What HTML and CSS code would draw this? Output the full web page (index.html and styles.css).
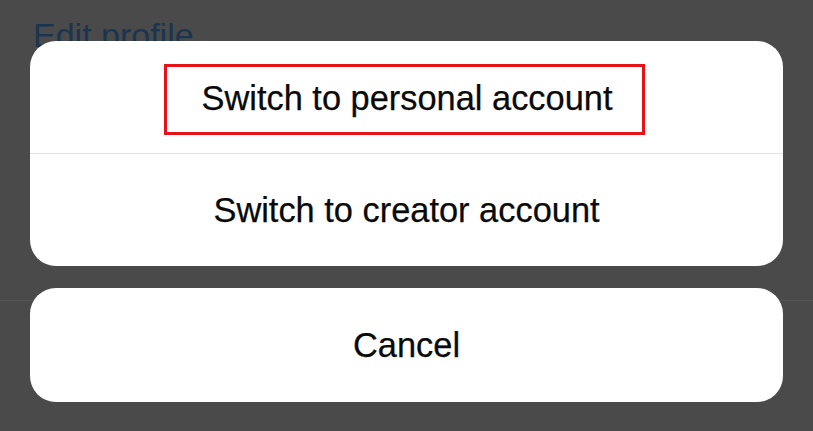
FILE: index.html
```html
<!DOCTYPE html>
<html lang="en">
<head>
<meta charset="utf-8">
<title>Switch account</title>
<link rel="stylesheet" href="styles.css">
</head>
<body>
<div class="screen">
  <div class="backdrop">
    <div class="page-title">Edit profile</div>
    <div class="page-rule"></div>
  </div>
  <div class="sheet">
    <div class="card">
      <div class="action action-first">
        <span class="highlight">Switch to personal account</span>
      </div>
      <div class="divider"></div>
      <div class="action">Switch to creator account</div>
    </div>
    <div class="card cancel-card">
      <div class="action action-cancel">Cancel</div>
    </div>
  </div>
</div>
</body>
</html>
```
FILE: styles.css
```css
html, body {
  margin: 0;
  padding: 0;
  background: #4a4a4a;
}
.screen {
  position: relative;
  width: 813px;
  height: 431px;
  overflow: hidden;
  background: #4a4a4a;
  font-family: "Liberation Sans", Arial, sans-serif;
}
.backdrop {
  display: flex;
  flex-direction: column;
  padding-top: 16px;
}
.page-title {
  padding-left: 33px;
  font-size: 34px;
  color: #1b3550;
  line-height: 38px;
}
.page-rule {
  margin-top: 246px;
  height: 1px;
  background: #545454;
}
.sheet {
  position: absolute;
  left: 30px;
  right: 30px;
  top: 41px;
  display: flex;
  flex-direction: column;
  gap: 22px;
}
.card {
  background: #ffffff;
  border-radius: 26px;
  display: flex;
  flex-direction: column;
}
.action {
  height: 112px;
  display: flex;
  align-items: center;
  justify-content: center;
  font-size: 34.4px;
  color: #0a0a0a;
  -webkit-text-stroke: 0.25px #0a0a0a;
}
.divider {
  height: 1px;
  background: #e2e2e2;
}
.highlight {
  box-sizing: border-box;
  width: 481px;
  height: 71px;
  margin-top: 5px;
  margin-right: 4px;
  border: 3.5px solid #e5121a;
  display: flex;
  align-items: center;
  justify-content: center;
  padding-left: 5px;
  padding-bottom: 3px;
}
.action-cancel {
  height: 114px;
}
```
